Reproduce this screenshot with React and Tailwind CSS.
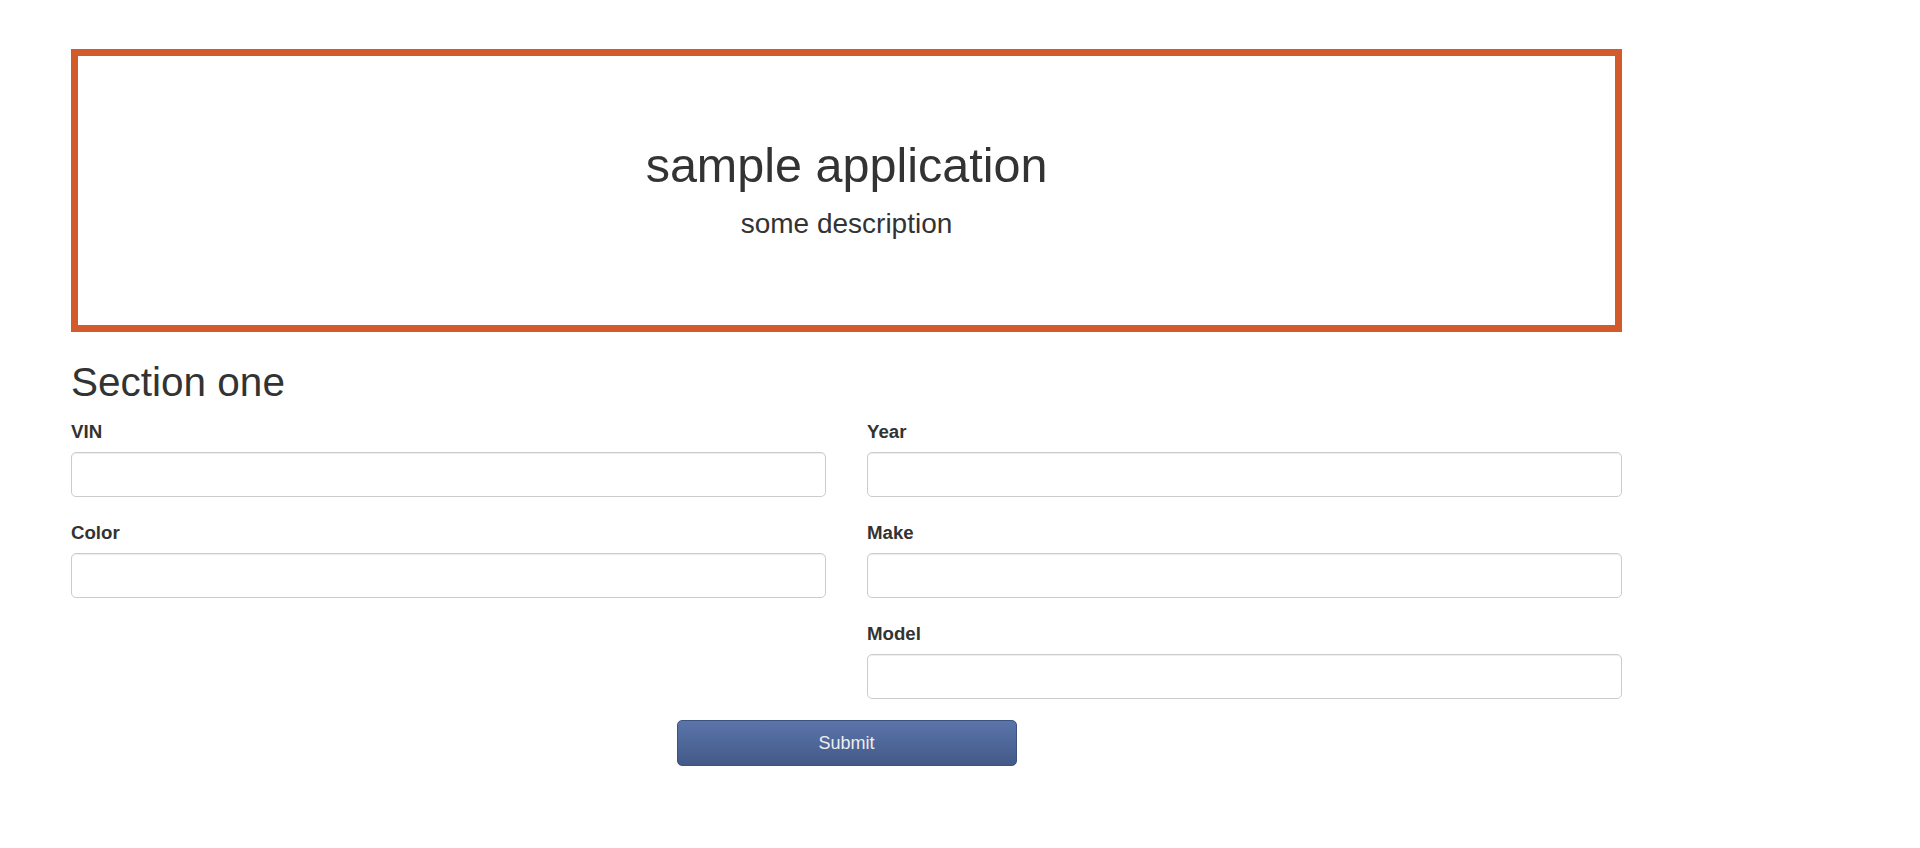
import React from 'react';

function Field({ label }) {
    return (
        <div className="mb-[22px]">
            <label className="block font-bold text-[18.67px] leading-[27px] mb-[7px]">{label}</label>
            <input
                type="text"
                className="block w-full h-[45px] px-4 rounded-[5px] border border-[#ccc] bg-white shadow-[inset_0_1px_1px_rgba(0,0,0,0.075)] outline-none"
            />
        </div>
    );
}

export default function App() {
    return (
        <div className="min-h-screen bg-white text-[#333] font-['Liberation_Sans',Arial,sans-serif]">
            <div className="w-[1551px] ml-[71px] pt-[49px]">
                {/* Header box */}
                <div className="border-[7px] border-[#d35a2a] h-[283px] flex flex-col items-center pt-[83px] text-center">
                    <h1 className="text-[48.5px] leading-[53px]">sample application</h1>
                    <p className="text-[28px] leading-[39px] mt-[12px]">some description</p>
                </div>

                <h2 className="text-[40.5px] leading-[44px] mt-[28px] mb-[14px]">Section one</h2>

                <form className="grid grid-cols-2 gap-x-[41px]">
                    <div>
                        <Field label="VIN" />
                        <Field label="Color" />
                    </div>
                    <div>
                        <Field label="Year" />
                        <Field label="Make" />
                        <Field label="Model" />
                    </div>
                </form>

                <div className="flex justify-center -mt-[1px]">
                    <button
                        type="button"
                        className="w-[340px] h-[46px] rounded-[5px] border border-[#3e5380] bg-gradient-to-b from-[#5a75ab] to-[#435a88] text-[#eee] text-[18px]"
                    >
                        Submit
                    </button>
                </div>
            </div>
        </div>
    );
}
